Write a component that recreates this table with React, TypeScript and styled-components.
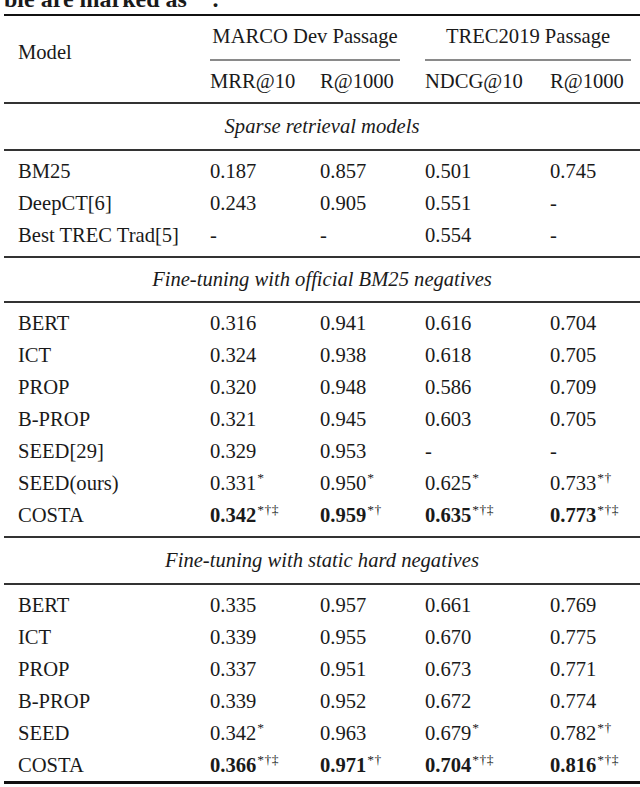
import React from "react";
import styled, { createGlobalStyle } from "styled-components";

const Global = createGlobalStyle`
  html, body { margin: 0; padding: 0; background: #fff; overflow: hidden; }
`;

const Page = styled.div`
  width: 640px;
  height: 787px;
  overflow: hidden;
  font-family: "Liberation Serif", "Times New Roman", serif;
  color: #1a1a1a;
`;

const Caption = styled.div`
  font-weight: bold;
  font-size: 24px;
  line-height: 24px;
  height: 24px;
  margin-top: -13px;
  margin-bottom: 3px;
  padding-left: 4px;
  white-space: nowrap;
`;

const CapSup = styled.sup`
  font-size: 15px;
  vertical-align: 0;
  position: relative;
  top: -14px;
  margin-left: 12px;
  margin-right: 6px;
`;

const Table = styled.div`
  margin-left: 4px;
  width: 640px;
  border-top: 2px solid #111;
  border-bottom: 3px solid #111;
  font-size: 20.6px;
`;

const cols = "192px 110px 105px 125px 1fr";

const Head = styled.div`
  display: grid;
  grid-template-columns: ${cols};
  grid-template-rows: 45px 41px;
  padding-left: 14px;
  border-bottom: 2px solid #333;
`;

const ModelHead = styled.div`
  grid-column: 1;
  grid-row: 1 / 3;
  align-self: center;
  padding-bottom: 14px;
`;

const Group = styled.div<{ $col: string; $trim: number }>`
  grid-column: ${(p) => p.$col};
  grid-row: 1;
  margin-right: ${(p) => p.$trim}px;
  border-bottom: 2px solid #8a8a8a;
  display: flex;
  align-items: center;
  justify-content: center;
  padding-bottom: 2px;
`;

const SubHead = styled.div<{ $col: number }>`
  grid-column: ${(p) => p.$col};
  grid-row: 2;
  display: flex;
  align-items: center;
`;

const Section = styled.div<{ $h: number }>`
  height: ${(p) => p.$h}px;
  display: flex;
  align-items: center;
  justify-content: center;
  font-style: italic;
  border-bottom: 2px solid #333;
  padding-right: 4px;
`;

const Body = styled.div<{ $last?: boolean }>`
  padding: 4px 0 ${(p) => (p.$last ? 0 : 5)}px 14px;
  border-bottom: ${(p) => (p.$last ? "none" : "2px solid #333")};
`;

const Row = styled.div`
  display: grid;
  grid-template-columns: ${cols};
  height: 32px;
  line-height: 32px;
  white-space: nowrap;
`;

const Cell = styled.div<{ $bold?: boolean }>`
  font-weight: ${(p) => (p.$bold ? "bold" : "normal")};
`;

const Sup = styled.span`
  font-size: 13.5px;
  font-weight: normal;
  position: relative;
  top: -8px;
  margin-left: 1px;
  letter-spacing: 0.5px;
`;

type Val = [string, string?];
type RowData = { name: string; vals: Val[]; bold?: boolean };

const sparse: RowData[] = [
  { name: "BM25", vals: [["0.187"], ["0.857"], ["0.501"], ["0.745"]] },
  { name: "DeepCT[6]", vals: [["0.243"], ["0.905"], ["0.551"], ["-"]] },
  { name: "Best TREC Trad[5]", vals: [["-"], ["-"], ["0.554"], ["-"]] },
];

const bm25: RowData[] = [
  { name: "BERT", vals: [["0.316"], ["0.941"], ["0.616"], ["0.704"]] },
  { name: "ICT", vals: [["0.324"], ["0.938"], ["0.618"], ["0.705"]] },
  { name: "PROP", vals: [["0.320"], ["0.948"], ["0.586"], ["0.709"]] },
  { name: "B-PROP", vals: [["0.321"], ["0.945"], ["0.603"], ["0.705"]] },
  { name: "SEED[29]", vals: [["0.329"], ["0.953"], ["-"], ["-"]] },
  { name: "SEED(ours)", vals: [["0.331", "*"], ["0.950", "*"], ["0.625", "*"], ["0.733", "*†"]] },
  { name: "COSTA", bold: true, vals: [["0.342", "*†‡"], ["0.959", "*†"], ["0.635", "*†‡"], ["0.773", "*†‡"]] },
];

const hard: RowData[] = [
  { name: "BERT", vals: [["0.335"], ["0.957"], ["0.661"], ["0.769"]] },
  { name: "ICT", vals: [["0.339"], ["0.955"], ["0.670"], ["0.775"]] },
  { name: "PROP", vals: [["0.337"], ["0.951"], ["0.673"], ["0.771"]] },
  { name: "B-PROP", vals: [["0.339"], ["0.952"], ["0.672"], ["0.774"]] },
  { name: "SEED", vals: [["0.342", "*"], ["0.963"], ["0.679", "*"], ["0.782", "*†"]] },
  { name: "COSTA", bold: true, vals: [["0.366", "*†‡"], ["0.971", "*†"], ["0.704", "*†‡"], ["0.816", "*†‡"]] },
];

const Rows = ({ data }: { data: RowData[] }) => (
  <>
    {data.map((r, i) => (
      <Row key={i}>
        <Cell>{r.name}</Cell>
        {r.vals.map(([v, s], j) => (
          <Cell key={j} $bold={r.bold && v !== "-"}>
            {v}
            {s && <Sup>{s}</Sup>}
          </Cell>
        ))}
      </Row>
    ))}
  </>
);

export default function App() {
  return (
    <Page>
      <Global />
      <Caption>
        ble are marked as<CapSup>‡</CapSup>.
      </Caption>
      <Table>
        <Head>
          <ModelHead>Model</ModelHead>
          <Group $col="2 / 4" $trim={25}>MARCO Dev Passage</Group>
          <Group $col="4 / 6" $trim={13}>TREC2019 Passage</Group>
          <SubHead $col={2}>MRR@10</SubHead>
          <SubHead $col={3}>R@1000</SubHead>
          <SubHead $col={4}>NDCG@10</SubHead>
          <SubHead $col={5}>R@1000</SubHead>
        </Head>
        <Section $h={45}>Sparse retrieval models</Section>
        <Body>
          <Rows data={sparse} />
        </Body>
        <Section $h={43}>Fine-tuning with official BM25 negatives</Section>
        <Body>
          <Rows data={bm25} />
        </Body>
        <Section $h={45}>Fine-tuning with static hard negatives</Section>
        <Body $last>
          <Rows data={hard} />
        </Body>
      </Table>
    </Page>
  );
}
